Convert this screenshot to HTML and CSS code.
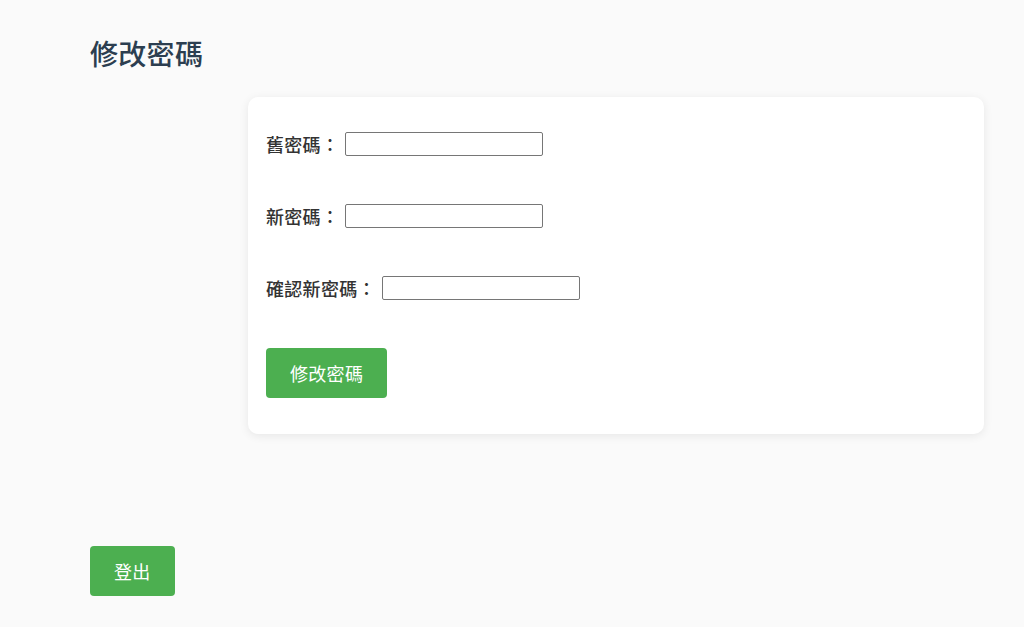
FILE: index.html
```html
<!DOCTYPE html>
<html lang="zh-Hant">
<head>
<meta charset="utf-8">
<title>修改密碼</title>
<link rel="stylesheet" href="styles.css">
</head>
<body>
<div class="page">
  <h1 class="title">修改密碼</h1>
  <div class="card">
    <form class="form">
      <div class="row"><label class="label">舊密碼：</label><input class="input" type="password"></div>
      <div class="row"><label class="label">新密碼：</label><input class="input" type="password"></div>
      <div class="row"><label class="label">確認新密碼：</label><input class="input" type="password"></div>
      <div class="actions"><button class="btn" type="button">修改密碼</button></div>
    </form>
  </div>
  <div class="footer"><button class="btn" type="button">登出</button></div>
</div>
</body>
</html>
```

FILE: styles.css
```css
html, body {
  margin: 0;
  padding: 0;
  background: #fafafa;
  font-family: "Noto Sans CJK TC", "Noto Sans", sans-serif;
}
.page {
  padding: 33px 40px 0 90px;
}
.title {
  margin: 0;
  font-size: 28px;
  line-height: 40px;
  font-weight: 500;
  color: #2c3e50;
  letter-spacing: 0.3px;
}
.card {
  margin: 24px 0 0 158px;
  background: #fff;
  border-radius: 10px;
  box-shadow: 0 2px 10px rgba(0, 0, 0, 0.08);
  padding: 35px 18px 36px;
}
.form {
  display: flex;
  flex-direction: column;
  gap: 48px;
}
.row {
  display: flex;
  align-items: center;
  height: 24px;
}
.label {
  font-size: 18px;
  font-weight: 500;
  color: #333;
  letter-spacing: 0.3px;
  margin-right: 6px;
}
.input {
  box-sizing: border-box;
  width: 198px;
  height: 24px;
  border: 1px solid #767676;
  border-radius: 2px;
  background: #fff;
  margin: 0;
  padding: 1px 2px;
}
.actions {
  display: flex;
}
.btn {
  height: 50px;
  padding: 0 24px;
  border: none;
  border-radius: 4px;
  background: #4caf50;
  color: #fff;
  font-family: "Noto Sans CJK TC", "Noto Sans", sans-serif;
  font-size: 18px;
  font-weight: 400;
  letter-spacing: 0.3px;
  cursor: pointer;
}
.footer {
  margin-top: 112px;
}
```
